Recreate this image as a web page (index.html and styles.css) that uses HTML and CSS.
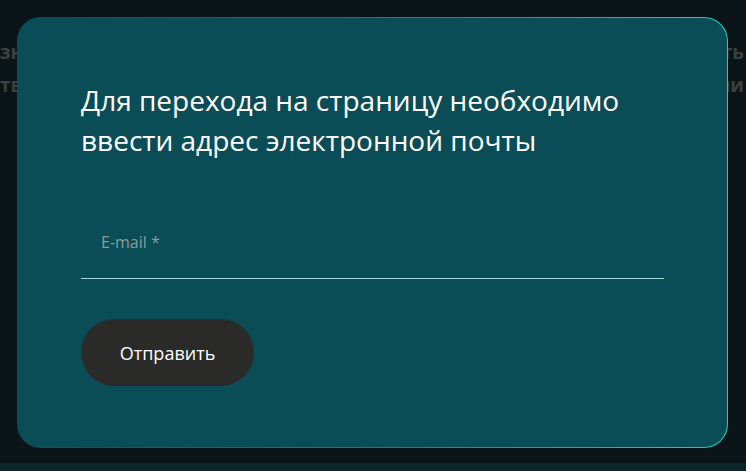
FILE: index.html
```html
<!DOCTYPE html>
<html lang="ru">
<head>
<meta charset="utf-8">
<link rel="stylesheet" href="styles.css">
</head>
<body>
<div class="page">
  <div class="bg-row bg-row-1"><span class="bg-left">знать</span><span class="bg-right">ть</span></div>
  <div class="bg-row bg-row-2"><span class="bg-left">тво</span><span class="bg-right">ии</span></div>
  <div class="bottom-strip"></div>
</div>
<div class="modal">
  <h2 class="title">Для перехода на страницу необходимо ввести адрес электронной почты</h2>
  <div class="field">
    <span class="placeholder">E-mail *</span>
  </div>
  <button class="submit">Отправить</button>
</div>
</body>
</html>
```
FILE: styles.css
```css
html, body {
  margin: 0;
  padding: 0;
  width: 746px;
  height: 471px;
  overflow: hidden;
  background: #0b1517;
  font-family: "Open Sans", "Noto Sans", sans-serif;
}
.page {
  position: relative;
  width: 746px;
  height: 471px;
  padding: 36px 2px 0 0;
  box-sizing: border-box;
}
.bg-row {
  display: flex;
  justify-content: space-between;
  font-family: "Open Sans", sans-serif;
  font-weight: 700;
  font-size: 19px;
  color: #3b4143;
  line-height: 33px;
  white-space: nowrap;
}
.bottom-strip {
  position: absolute;
  left: 0;
  right: 0;
  bottom: 0;
  height: 8px;
  background: #0c2528;
}
.modal {
  position: absolute;
  left: 17px;
  top: 17px;
  width: 711px;
  height: 431px;
  box-sizing: border-box;
  border: 1px solid transparent;
  border-radius: 24px;
  background:
    linear-gradient(#0a4d56, #0a4d56) padding-box,
    linear-gradient(to right, #0a4d56 0%, #0f7f82 50%, #1fd0c6 100%) border-box;
  padding: 62px 63px 0 63px;
}
.title {
  margin: 0;
  font-weight: 400;
  font-size: 28px;
  line-height: 40px;
  color: #ffffff;
  width: 600px;
}
.field {
  margin-top: 58px;
  height: 61px;
  border-bottom: 1px solid #9fd6d6;
  padding-left: 20px;
  box-sizing: border-box;
  display: flex;
  align-items: center;
}
.placeholder {
  font-size: 16px;
  color: #8a9c9c;
  margin-top: -13px;
}
.submit {
  margin-top: 40px;
  width: 173px;
  height: 67px;
  border: none;
  border-radius: 34px;
  background: #2a2a28;
  color: #ffffff;
  font-family: "Open Sans", "Noto Sans", sans-serif;
  font-size: 18px;
  padding: 0;
  display: block;
}
```
